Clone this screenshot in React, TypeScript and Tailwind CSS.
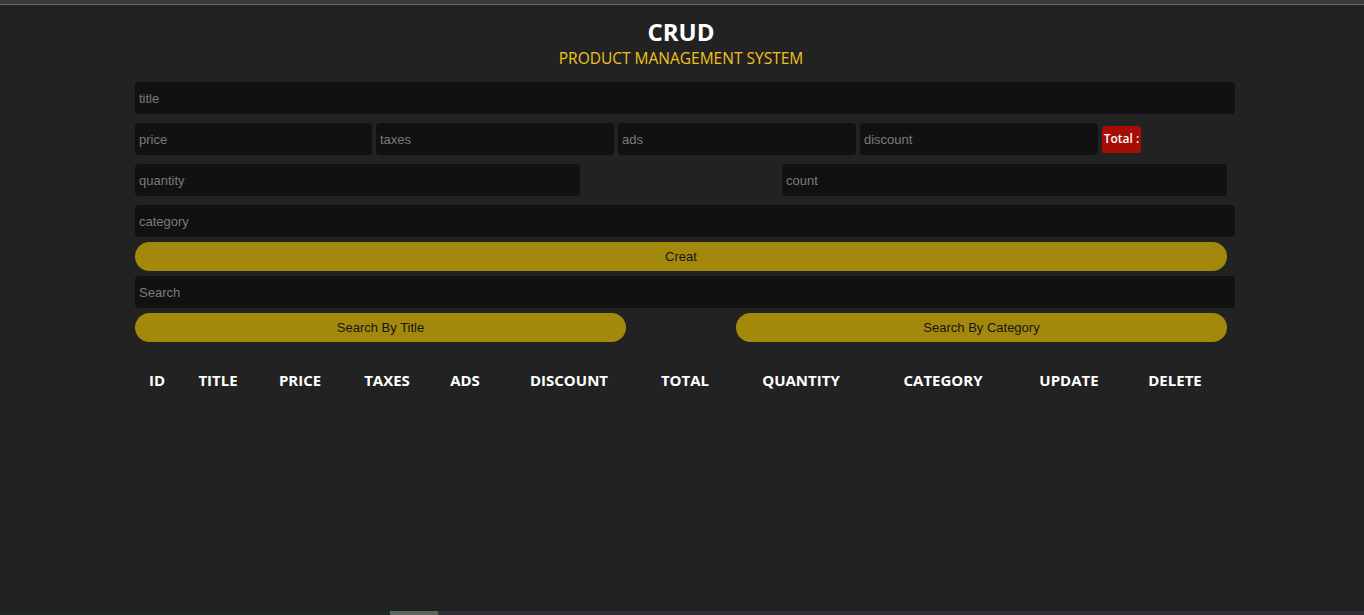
import React from 'react';

const headers = [
  { label: 'ID', w: 'w-[44px]' },
  { label: 'TITLE', w: 'w-[78px]' },
  { label: 'PRICE', w: 'w-[86px]' },
  { label: 'TAXES', w: 'w-[88px]' },
  { label: 'ADS', w: 'w-[68px]' },
  { label: 'DISCOUNT', w: 'w-[140px]' },
  { label: 'TOTAL', w: 'w-[92px]' },
  { label: 'QUANTITY', w: 'w-[140px]' },
  { label: 'CATEGORY', w: 'w-[144px]' },
  { label: 'UPDATE', w: 'w-[108px]' },
  { label: 'DELETE', w: 'w-[104px]' },
];

function Field({ placeholder, className }: { placeholder: string; className: string }) {
  return (
    <input
      placeholder={placeholder}
      className={`h-[32px] rounded-[4px] bg-[#111111] px-[4px] text-[13px] text-white outline-none placeholder:text-[#7a7a7a] font-['Liberation_Sans',Arial,sans-serif] ${className}`}
    />
  );
}

function Pill({ label, className }: { label: string; className: string }) {
  return (
    <button className={`h-[29px] rounded-full bg-[#a3890b] text-[13px] text-[#151515] font-['Liberation_Sans',Arial,sans-serif] ${className}`}>
      {label}
    </button>
  );
}

export default function App() {
  return (
    <div className="h-[615px] bg-[#222222] flex flex-col overflow-hidden">
      <div className="h-[4px] bg-[#3b3b3b]" />
      <div className="h-[1px] bg-[#6b6b6b]" />
      <div className="flex-1">
        <div className="w-[1100px] ml-[135px]">
          <div className="text-center pt-[12px] pr-[8px] font-['Open_Sans','Noto_Sans',sans-serif]">
            <h1 className="text-[24px] leading-[30px] font-bold text-white">CRUD</h1>
            <p className="text-[15.5px] leading-[20px] mt-[1px] text-[#f2c21b]">PRODUCT MANAGEMENT SYSTEM</p>
          </div>

          <div className="mt-[14px] flex flex-col">
            <Field placeholder="title" className="w-[1100px]" />

            <div className="flex items-center gap-[4px] mt-[9px]">
              <Field placeholder="price" className="w-[237px]" />
              <Field placeholder="taxes" className="w-[238px]" />
              <Field placeholder="ads" className="w-[238px]" />
              <Field placeholder="discount" className="w-[238px]" />
              <span className="h-[27px] w-[39px] flex items-center justify-center rounded-[3px] bg-[#a50d05] text-white text-[12px] font-semibold font-['Open_Sans','Noto_Sans',sans-serif]">
                Total :
              </span>
            </div>

            <div className="flex justify-between w-[1092px] mt-[9px]">
              <Field placeholder="quantity" className="w-[445px]" />
              <Field placeholder="count" className="w-[445px]" />
            </div>

            <Field placeholder="category" className="w-[1100px] mt-[9px]" />
            <Pill label="Creat" className="w-[1092px] mt-[5px]" />
            <Field placeholder="Search" className="w-[1100px] mt-[5px]" />

            <div className="flex justify-between w-[1092px] mt-[5px]">
              <Pill label="Search By Title" className="w-[491px]" />
              <Pill label="Search By Category" className="w-[491px]" />
            </div>
          </div>

          <div className="flex mt-[27px] text-white text-[15px] font-bold font-['Open_Sans','Noto_Sans',sans-serif]">
            {headers.map(h => (
              <div key={h.label} className={`${h.w} text-center`}>{h.label}</div>
            ))}
          </div>
        </div>
      </div>
      <div className="h-[4px] flex">
        <div className="w-[390px] bg-[#1c2a26]" />
        <div className="w-[48px] bg-[#5e6660]" />
        <div className="flex-1 bg-[#2f3134]" />
      </div>
    </div>
  );
}
